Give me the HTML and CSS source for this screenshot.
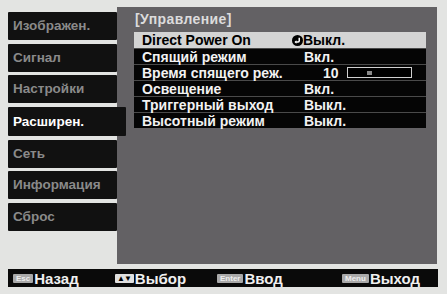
FILE: index.html
```html
<!DOCTYPE html>
<html lang="ru">
<head>
<meta charset="utf-8">
<link rel="stylesheet" href="styles.css">
</head>
<body>
<div class="screen">
  <div class="main">
    <nav class="tabs">
      <div class="tab">Изображен.</div>
      <div class="tab">Сигнал</div>
      <div class="tab">Настройки</div>
      <div class="tab active">Расширен.</div>
      <div class="tab">Сеть</div>
      <div class="tab">Информация</div>
      <div class="tab">Сброс</div>
    </nav>
    <section class="panel">
      <div class="heading">[Управление]</div>
      <div class="rows">
        <div class="row selected">
          <span class="label">Direct Power On</span>
          <span class="value"><svg class="enter" viewBox="0 0 10 10" width="11" height="11"><circle cx="5" cy="5" r="5" fill="#000"/><path d="M6.6 2.6 V5.3 Q6.6 6.4 5.5 6.4 H3.4" fill="none" stroke="#fff" stroke-width="1.4"/><path d="M2.2 6.4 L4 4.8 V8 Z" fill="#fff"/></svg>Выкл.</span>
        </div>
        <div class="row"><span class="label">Спящий режим</span><span class="value indent">Вкл.</span></div>
        <div class="row"><span class="label">Время спящего реж.</span><span class="value num"><span class="n">10</span><span class="slider"><span class="knob"></span></span></span></div>
        <div class="row"><span class="label">Освещение</span><span class="value indent">Вкл.</span></div>
        <div class="row"><span class="label">Триггерный выход</span><span class="value indent">Выкл.</span></div>
        <div class="row"><span class="label">Высотный режим</span><span class="value indent">Выкл.</span></div>
      </div>
    </section>
  </div>
  <footer class="bar">
    <div class="hint w1"><span class="key">Esc</span>Назад</div>
    <div class="hint w2"><span class="key arrows">▲▼</span>Выбор</div>
    <div class="hint w3"><span class="key">Enter</span>Ввод</div>
    <div class="hint"><span class="key">Menu</span>Выход</div>
  </footer>
</div>
</body>
</html>
```
FILE: styles.css
```css
* { box-sizing: border-box; }
html, body { margin: 0; padding: 0; }
body {
  width: 447px;
  height: 294px;
  overflow: hidden;
  background: #e3e4e2;
  font-family: "Liberation Sans", Arial, sans-serif;
  font-weight: bold;
}
.screen {
  padding: 7px 0 0 8px;
}
.main {
  display: flex;
  height: 257px;
}
.tabs {
  width: 109px;
  padding-top: 5px;
  display: flex;
  flex-direction: column;
  gap: 3.67px;
}
.tab {
  height: 28px;
  background: #111111;
  color: #8a8a8a;
  font-size: 13.5px;
  line-height: 28px;
  padding-left: 5px;
  border-radius: 1px;
}
.tab.active {
  color: #ffffff;
  margin-right: -9px;
  position: relative;
  z-index: 1;
  height: 29px;
  line-height: 29px;
}
.panel {
  width: 320px;
  background: #636164;
  padding: 4px 0 0 17px;
}
.heading {
  color: #dcdcdc;
  font-size: 14px;
  line-height: 16px;
  padding-left: 1px;
  margin-bottom: 5px;
  letter-spacing: 0.4px;
}
.rows {
  width: 292px;
  background: #050505;
}
.row {
  display: flex;
  height: 16px;
  line-height: 16px;
  font-size: 14px;
  color: #f2f2f2;
  border-top: 1px solid #4a4a4a;
}
.row:first-child { border-top: none; }
.row.selected {
  background: #d4d4d4;
  color: #000;
}
.label {
  width: 158px;
  padding-left: 8px;
  white-space: nowrap;
}
.value {
  display: flex;
  align-items: center;
}
.value.indent { padding-left: 12px; }
.enter { margin-right: 0; }
.value.num { padding-left: 31px; }
.n { width: 24px; }
.slider {
  width: 65px;
  height: 11px;
  border: 1px solid #d0d0d0;
  background: #000;
  display: flex;
  align-items: center;
  padding-left: 19px;
}
.knob {
  width: 5px;
  height: 4px;
  background: #8a8a8a;
}
.bar {
  margin-top: 5px;
  width: 430px;
  height: 18px;
  background: #0a0a0a;
  display: flex;
  align-items: center;
  padding-left: 5px;
  color: #f0f0f0;
  font-size: 15px;
}
.hint {
  display: flex;
  align-items: center;
}
.w1 { width: 102px; }
.w2 { width: 102px; }
.w3 { width: 125px; }
.key {
  background: #a9a9a9;
  color: #eeeeee;
  font-size: 8px;
  height: 9px;
  line-height: 9px;
  padding: 0 3px;
  margin-right: 1px;
  border-radius: 1px;
}
.key.arrows {
  color: #000;
  background: #e0e0e0;
  font-size: 8px;
  letter-spacing: -1px;
  padding: 0 3px 0 2px;
}
```
